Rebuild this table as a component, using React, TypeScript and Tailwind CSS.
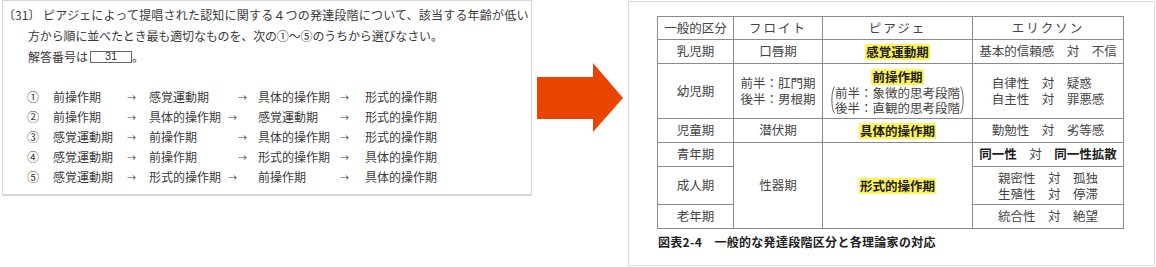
import React from 'react'

const jp = "font-['Noto_Sans_CJK_JP','Noto_Sans_CJK_SC',sans-serif]"

const OPTIONS = [
  { n: '①', a: '前操作期', b: '感覚運動期', c: '具体的操作期', d: '形式的操作期' },
  { n: '②', a: '前操作期', b: '具体的操作期', c: '感覚運動期', d: '形式的操作期' },
  { n: '③', a: '感覚運動期', b: '前操作期', c: '具体的操作期', d: '形式的操作期' },
  { n: '④', a: '感覚運動期', b: '前操作期', c: '形式的操作期', d: '具体的操作期' },
  { n: '⑤', a: '感覚運動期', b: '形式的操作期', c: '前操作期', d: '具体的操作期' },
]

function Arrow() {
  return <span className="text-[9px] leading-none text-[#444]">→</span>
}

function Question() {
  return (
    <div className={`ml-[2px] w-[530px] h-[196px] border border-b-2 border-[#d6d6d6] bg-white text-[#3a3a3a] ${jp}`}>
      <div className="pt-[3px] text-[12px] leading-[21px]">
        <div className="flex whitespace-nowrap">
          <span className="w-[40px]">〔31〕</span>
          <span className="tracking-[0.2px]">ピアジェによって提唱された認知に関する４つの発達段階について、該当する年齢が低い</span>
        </div>
        <div className="pl-[25px] whitespace-nowrap tracking-[-0.15px]">
          方から順に並べたとき最も適切なものを、次の①～⑤のうちから選びなさい。
        </div>
        <div className="pl-[25px] flex items-center h-[21px] whitespace-nowrap">
          <span>解答番号は</span>
          <span className="ml-[2px] w-[42px] h-[12px] border border-[#666] flex items-center justify-center font-['Liberation_Sans',sans-serif] text-[11px] leading-none text-[#333]">
            31
          </span>
          <span>。</span>
        </div>
      </div>

      <div className="mt-[20px] pl-[24px] text-[12px] leading-[20px]">
        {OPTIONS.map((o) => (
          <div key={o.n} className="flex items-center h-[20px] whitespace-nowrap">
            <span className="w-[26px]">{o.n}</span>
            <span className="w-[74px]">{o.a}</span>
            <span className="w-[22px] flex items-center"><Arrow /></span>
            <span className={o.b.length === 6 ? 'w-[79px]' : 'w-[89px]'}>{o.b}</span>
            <span className={`${o.b.length === 6 ? 'w-[30px]' : 'w-[20px]'} flex items-center`}><Arrow /></span>
            <span className="w-[82px]">{o.c}</span>
            <span className="w-[25px] flex items-center"><Arrow /></span>
            <span>{o.d}</span>
          </div>
        ))}
      </div>
    </div>
  )
}

function Mark({ children }: { children: React.ReactNode }) {
  return (
    <span className="bg-[#fff35a] px-[1px] font-bold text-[#1e1e1e] leading-[16px]">{children}</span>
  )
}

function Paren({ flip }: { flip?: boolean }) {
  return (
    <svg width="5" height="28" viewBox="0 0 5 28" className={flip ? 'scale-x-[-1]' : ''}>
      <path d="M4.5 0.5 C1 6 1 22 4.5 27.5" fill="none" stroke="#555" strokeWidth="0.9" />
    </svg>
  )
}

const cell = 'bg-white flex items-center justify-center'

function DevTable() {
  return (
    <div className={`text-[12.5px] text-[#444] ${jp}`}>
      <div className="grid w-fit grid-cols-[75px_88px_149px_150px] grid-rows-[22px_23px_54px_23px_23px_37px_23px] gap-px border border-[#8a8a8a] bg-[#8a8a8a]">
        <div className={cell}>一般的区分</div>
        <div className={`${cell} tracking-[2px]`}>フロイト</div>
        <div className={`${cell} tracking-[2px]`}>ピアジェ</div>
        <div className={`${cell} tracking-[2px]`}>エリクソン</div>

        <div className={cell}>乳児期</div>
        <div className={cell}>口唇期</div>
        <div className={cell}><Mark>感覚運動期</Mark></div>
        <div className={cell}>基本的信頼感　対　不信</div>

        <div className={cell}>幼児期</div>
        <div className={`${cell} flex-col leading-[16px]`}>
          <span>前半：肛門期</span>
          <span>後半：男根期</span>
        </div>
        <div className={`${cell} flex-col leading-[15px] pt-px`}>
          <Mark>前操作期</Mark>
          <div className="flex items-center">
            <Paren />
            <div className="flex flex-col">
              <span>前半：象徴的思考段階</span>
              <span>後半：直観的思考段階</span>
            </div>
            <Paren flip />
          </div>
        </div>
        <div className={cell}>
          <div className="flex flex-col leading-[16px]">
            <span>自律性　対　疑惑</span>
            <span>自主性　対　罪悪感</span>
          </div>
        </div>

        <div className={cell}>児童期</div>
        <div className={cell}>潜伏期</div>
        <div className={cell}><Mark>具体的操作期</Mark></div>
        <div className={cell}>勤勉性　対　劣等感</div>

        <div className={cell}>青年期</div>
        <div className={`${cell} row-span-3`}>性器期</div>
        <div className={`${cell} row-span-3`}><Mark>形式的操作期</Mark></div>
        <div className={`${cell} font-bold text-[#1e1e1e]`}>
          同一性<span className="font-normal text-[#444]">　対　</span>同一性拡散
        </div>

        <div className={cell}>成人期</div>
        <div className={cell}>
          <div className="flex flex-col leading-[16px]">
            <span>親密性　対　孤独</span>
            <span>生殖性　対　停滞</span>
          </div>
        </div>

        <div className={cell}>老年期</div>
        <div className={cell}>統合性　対　絶望</div>
      </div>
      <div className="mt-[6px] pl-px text-[12px] leading-[14px] font-bold text-[#1e1e1e] tracking-[0.3px] whitespace-nowrap">
        図表2-4　一般的な発達段階区分と各理論家の対応
      </div>
    </div>
  )
}

export default function App() {
  return (
    <div className="flex items-start w-[1156px] h-[267px] bg-white">
      <Question />
      <svg width="86" height="69" viewBox="0 0 86 69" className="ml-[5px] mt-[63px] shrink-0">
        <polygon points="0,14 56,14 56,0 86,35 56,69 56,56 0,56" fill="#e94400" />
      </svg>
      <div className="ml-[5px] mt-[1px] w-[527px] h-[265px] border border-[#dcdcdc] bg-white pl-[28px] pt-[14px]">
        <DevTable />
      </div>
    </div>
  )
}
